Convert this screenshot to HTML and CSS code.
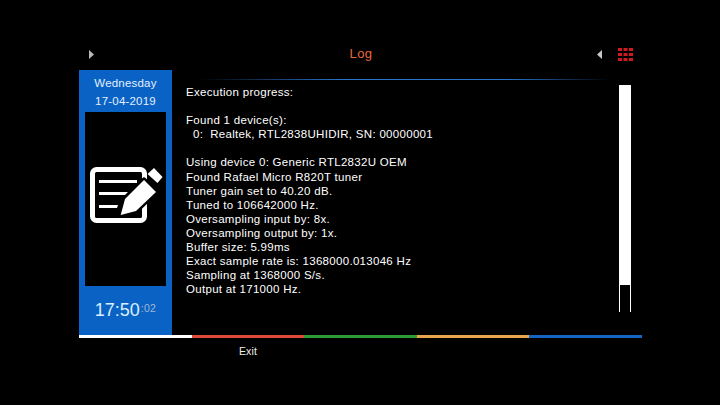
FILE: index.html
```html
<!DOCTYPE html>
<html lang="en">
<head>
<meta charset="utf-8">
<title>Log</title>
<link rel="stylesheet" href="styles.css">
</head>
<body>
<div class="screen">
  <header class="header">
    <svg class="arrow" width="5" height="9" viewBox="0 0 5 9"><path d="M0 0L5 4.500L0 9Z" fill="#b9b9b9"/></svg>
    <h1 class="title">Log</h1>
    <svg class="arrow" width="5" height="9" viewBox="0 0 5 9"><path d="M5 0L0 4.500L5 9Z" fill="#c8c8c8"/></svg>
    <svg class="grid" width="15" height="13" viewBox="0 0 15 13" fill="#d01a20">
      <rect width="4" height="3"/><rect x="5.500" width="4" height="3"/><rect x="11" width="4" height="3"/>
      <rect y="5" width="4" height="3"/><rect x="5.500" y="5" width="4" height="3"/><rect x="11" y="5" width="4" height="3"/>
      <rect y="10" width="4" height="3"/><rect x="5.500" y="10" width="4" height="3"/><rect x="11" y="10" width="4" height="3"/>
    </svg>
  </header>
  <main class="main">
    <aside class="side">
      <div class="date">
        <div>Wednesday</div>
        <div>17-04-2019</div>
      </div>
      <div class="picture">
        <svg width="74" height="58" viewBox="0 0 74 58">
          <rect x="2.500" y="2.500" width="52" height="51" rx="4" fill="none" stroke="#fff" stroke-width="5"/>
          <path d="M9 13H47V16H9ZM9 25H38L35 28H9ZM9 38H28L27 41H9Z" fill="#fff"/>
          <path d="M35 32L54 13L66 25L46 44L30.700 48Z" fill="#fff" stroke="#000" stroke-width="5" stroke-linejoin="round" paint-order="stroke"/>
          <path d="M57.500 7L64 1L72.500 10L67.500 16Z" fill="#fff"/>
        </svg>
      </div>
      <div class="clock"><span class="time">17:50</span><span class="secs">:02</span></div>
    </aside>
    <section class="content">
      <div class="rule"></div>
      <div class="body">
        <pre class="log">Execution progress:

Found 1 device(s):
  0:  Realtek, RTL2838UHIDIR, SN: 00000001

Using device 0: Generic RTL2832U OEM
Found Rafael Micro R820T tuner
Tuner gain set to 40.20 dB.
Tuned to 106642000 Hz.
Oversampling input by: 8x.
Oversampling output by: 1x.
Buffer size: 5.99ms
Exact sample rate is: 1368000.013046 Hz
Sampling at 1368000 S/s.
Output at 171000 Hz.</pre>
        <div class="scroll"><div class="thumb"></div></div>
      </div>
    </section>
  </main>
  <div class="bar">
    <span class="seg white"></span><span class="seg red"></span><span class="seg green"></span><span class="seg orange"></span><span class="seg blue"></span>
  </div>
  <footer class="footer"><span class="exit">Exit</span></footer>
</div>
</body>
</html>
```
FILE: styles.css
```css
* { box-sizing: border-box; }
html, body { margin: 0; background: #000; }
body { width: 720px; height: 405px; overflow: hidden; font-family: "Liberation Sans", Arial, sans-serif; color: #fff; }
.screen { width: 563px; margin-left: 79px; padding-top: 40px; }
.header { display: flex; align-items: center; height: 30px; padding: 0 9px 1px 10px; }
.title { flex: 1; margin: 0; padding: 0 0 2px 31px; text-align: center; font-size: 13px; font-weight: 400; color: #e8683a; letter-spacing: 0.4px; line-height: 26px; }
.arrow { flex: none; }
.grid { flex: none; margin-left: 16px; }
.main { display: flex; height: 265px; }
.side { width: 93px; flex: none; background: #0a62c4; padding: 0 6px; display: flex; flex-direction: column; }
.date { height: 42px; padding-top: 4px; text-align: center; font-size: 11.500px; line-height: 18px; color: #e2f0ff; letter-spacing: 0.2px; }
.picture { height: 174px; background: #000; display: flex; align-items: center; justify-content: center; padding: 0 0 6px 3px; }
.clock { flex: 1; display: flex; justify-content: center; align-items: flex-start; padding-top: 13px; }
.time { font-size: 18px; line-height: 22px; color: #d8f0ff; }
.secs { font-size: 10.500px; line-height: 14px; color: #a0b8d4; margin: 2px 0 0 1px; letter-spacing: 0.3px; }
.content { flex: 1; display: flex; flex-direction: column; min-width: 0; }
.rule { height: 1px; margin: 9px 32px 0 28px; background: linear-gradient(90deg, #000 0%, #2a74d0 35%, #2a74d0 75%, #000 100%); }
.body { display: flex; justify-content: space-between; padding: 5px 11px 0 14px; }
.log { margin: 0; font-family: "Liberation Sans", Arial, sans-serif; font-size: 11.500px; line-height: 14.100px; letter-spacing: 0.3px; color: #fff; }
.scroll { width: 12px; height: 227px; border: solid #fff; border-width: 0 1px; }
.thumb { height: 200px; margin: 0 -1px; background: #fff; }
.bar { display: flex; height: 3px; }
.seg { flex: 1; }
.white { background: #fff; }
.red { background: #e0483c; }
.green { background: #2f9a38; }
.orange { background: #e8a64c; }
.blue { background: #1664c4; }
.footer { padding: 7px 0 0 160px; }
.exit { font-size: 10.500px; line-height: 13px; color: #eee; display: block; letter-spacing: 0.1px; }
```
